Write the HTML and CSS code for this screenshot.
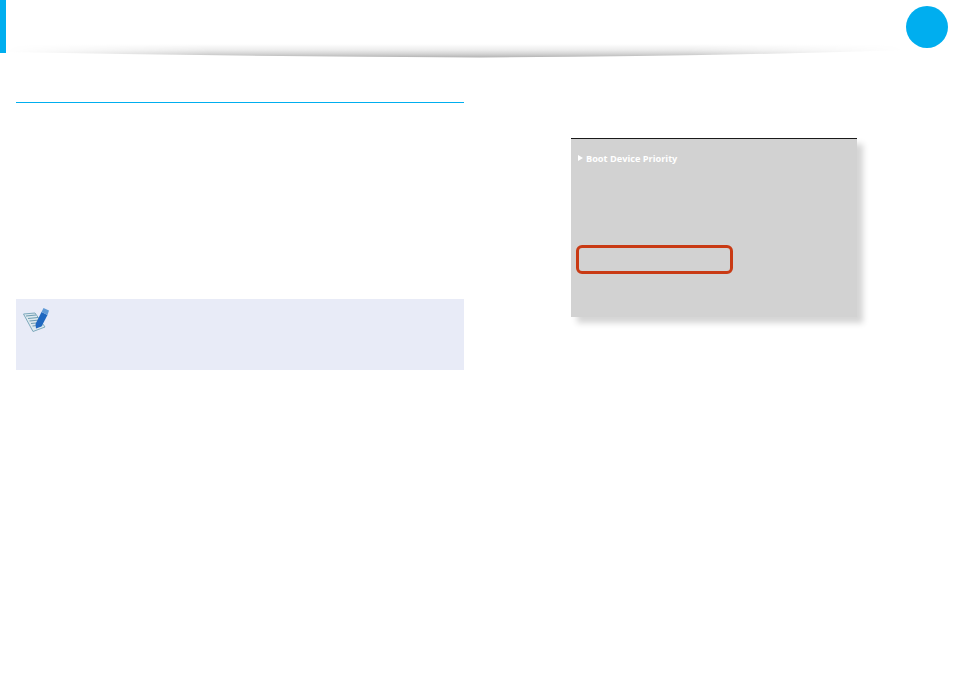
FILE: index.html
```html
<!DOCTYPE html>
<html lang="en">
<head>
<meta charset="utf-8">
<title>BIOS Boot Device Priority</title>
<link rel="stylesheet" href="styles.css">
</head>
<body>
<header class="header">
  <div class="accent"></div>
  <svg class="swoosh" width="954" height="20" viewBox="0 0 954 20" aria-hidden="true">
    <defs>
      <linearGradient id="sw" gradientUnits="userSpaceOnUse" x1="0" x2="0" y1="4" y2="17.500">
        <stop offset="0" stop-color="#ffffff"/>
        <stop offset="0.45" stop-color="#ececec"/>
        <stop offset="0.75" stop-color="#d2d2d2"/>
        <stop offset="1" stop-color="#b2b2b2"/>
      </linearGradient>
    </defs>
    <path d="M6 2 L910 2 L910 10 Q700 16.500 480 17.500 Q240 16.500 6 12 Z" fill="url(#sw)"/>
  </svg>
  <div class="badge"></div>
</header>
<main class="content">
  <section class="left">
    <div class="rule"></div>
    <aside class="note">
      <svg class="note-icon" width="27" height="27" viewBox="0 0 27 27" aria-hidden="true">
        <path d="M0.500 8 L12 7 L22 21 L10 25.500 Z" fill="#dde9ef" stroke="#7ea9bc" stroke-width="1"/>
        <path d="M3 10 L13 9 M5 12.500 L15 11.500 M6.500 15 L16.500 14 M8 17.500 L18 16.500 M9.500 20 L19.500 19" stroke="#6f9cb1" stroke-width="1.100"/>
        <path d="M12.500 18 L18.500 6 L24.500 9 L18.500 20.500 L13 22.500 Z" fill="#1f68c0"/>
        <path d="M18.500 6 L20.500 2 L26 4.500 L24.500 9 Z" fill="#5f9ad6"/>
      </svg>
    </aside>
  </section>
  <section class="right">
    <div class="panel">
      <div class="panel-title"><span class="arrow"></span>Boot Device Priority</div>
      <div class="highlight"></div>
    </div>
  </section>
</main>
</body>
</html>
```

FILE: styles.css
```css
* { box-sizing: border-box; }
html, body { margin: 0; padding: 0; background: #fff; }
body { width: 954px; height: 677px; overflow: hidden; font-family: "Open Sans", "Liberation Sans", sans-serif; }

.header { position: relative; height: 53px; display: flex; justify-content: space-between; }
.accent { position: relative; z-index: 1; width: 6px; height: 53px; background: #00aeef; }
.badge { position: relative; z-index: 1; width: 42px; height: 42px; margin: 6px 6px 0 0; border-radius: 50%; background: #00aeef; }
.swoosh {
  position: absolute; left: 0; top: 40px; filter: blur(0.4px);
  -webkit-mask-image: linear-gradient(to right, transparent 0.5%, #000 22%, #000 72%, transparent 95%);
  mask-image: linear-gradient(to right, transparent 0.5%, #000 22%, #000 72%, transparent 95%);
}

.content { display: flex; padding: 49px 0 0 16px; }
.left { width: 448px; }
.rule { height: 1px; background: #00aeef; }
.note { margin-top: 196px; height: 71px; padding: 7px 0 0 7px; background: #e8ebf7; }
.note-icon { display: block; filter: blur(0.4px); }

.right { padding: 36px 0 0 107px; }
.panel {
  width: 286px; height: 179px; padding: 13px 0 0 7px;
  background: #d2d2d2; border-top: 1px solid #1a1a1a;
  box-shadow: 6px 6px 6px rgba(0, 0, 0, 0.17);
}
.panel-title { display: flex; align-items: center; height: 12px; color: #fff; font-size: 9.2px; font-weight: 700; white-space: nowrap; }
.arrow { width: 0; height: 0; margin-right: 3px; border-left: 5px solid #fff; border-top: 3.5px solid transparent; border-bottom: 3.5px solid transparent; }
.highlight { width: 157px; height: 29px; margin: 81px 0 0 -2px; border: 3px solid #c93a14; border-radius: 6px; }
```
